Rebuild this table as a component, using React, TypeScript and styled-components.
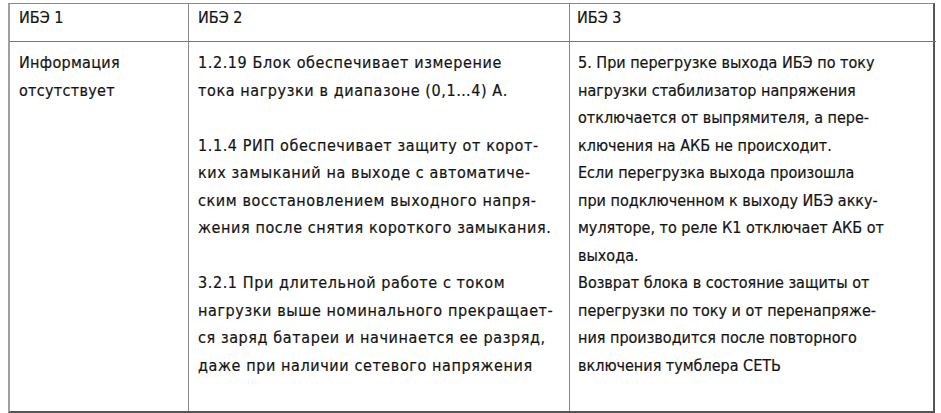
import React from "react";
import styled, { createGlobalStyle } from "styled-components";

const Global = createGlobalStyle`
  html, body { margin: 0; padding: 0; background: #ffffff; }
  body { font-family: "DejaVu Sans Condensed", "DejaVu Sans", "Liberation Sans", Arial, sans-serif; font-stretch: condensed; }
`;

const Page = styled.div`
  padding: 3px 0 0 8px;
  width: 941px;
  height: 413px;
  box-sizing: border-box;
`;

const Table = styled.div`
  display: grid;
  grid-template-columns: 179px 381px 366px;
  grid-template-rows: 38px 369px;
  width: 927px;
  border-top: 1px solid #8a8a8a;
  border-left: 2px solid #a0a0a0;
  border-right: 2px solid #555555;
  border-bottom: 2px solid #555555;
  box-sizing: border-box;
  color: #141414;
  font-size: 16px;
  -webkit-text-stroke: 0.2px #141414;
`;

const Cell = styled.div<{ $last?: boolean; $head?: boolean; $spacing?: number; $padLeft?: number }>`
  box-sizing: border-box;
  padding-top: ${(p) => (p.$head ? "1px" : "7px")};
  padding-right: 8px;
  padding-left: ${(p) => p.$padLeft ?? 9}px;
  border-right: ${(p) => (p.$last ? "none" : "1px solid #8a8a8a")};
  border-bottom: ${(p) => (p.$head ? "1px solid #777777" : "none")};
  line-height: ${(p) => (p.$head ? "26px" : "27.5px")};
  letter-spacing: ${(p) => p.$spacing ?? 0}px;
`;

const Para = styled.p`
  margin: 0 0 27.5px 0;
  &:last-child { margin-bottom: 0; }
`;

const Line = styled.span`
  display: block;
  white-space: nowrap;
`;

const col2: string[][] = [
  ["1.2.19 Блок обеспечивает измерение", "тока нагрузки в диапазоне (0,1…4) А."],
  [
    "1.1.4 РИП обеспечивает защиту от корот-",
    "ких замыканий на выходе с автоматиче-",
    "ским восстановлением выходного напря-",
    "жения после снятия короткого замыкания.",
  ],
  [
    "3.2.1 При длительной работе с током",
    "нагрузки выше номинального прекращает-",
    "ся заряд батареи и начинается ее разряд,",
    "даже при наличии сетевого напряжения",
  ],
];

const col3: string[] = [
  "5. При перегрузке выхода ИБЭ по току",
  "нагрузки стабилизатор напряжения",
  "отключается от выпрямителя, а пере-",
  "ключения на АКБ не происходит.",
  "Если перегрузка выхода произошла",
  "при подключенном к выходу ИБЭ акку-",
  "муляторе, то реле К1 отключает АКБ от",
  "выхода.",
  "Возврат блока в состояние защиты от",
  "перегрузки по току и от перенапряже-",
  "ния производится после повторного",
  "включения тумблера СЕТЬ",
];

export default function App() {
  return (
    <>
      <Global />
      <Page>
        <Table>
          <Cell $head $padLeft={9}>ИБЭ 1</Cell>
          <Cell $head $padLeft={9}>ИБЭ 2</Cell>
          <Cell $head $last $padLeft={7}>ИБЭ 3</Cell>
          <Cell $padLeft={9} $spacing={0.3}>
            <Line>Информация</Line>
            <Line>отсутствует</Line>
          </Cell>
          <Cell $padLeft={9} $spacing={0.6}>
            {col2.map((para, i) => (
              <Para key={i}>
                {para.map((l, j) => (
                  <Line key={j}>{l}</Line>
                ))}
              </Para>
            ))}
          </Cell>
          <Cell $last $padLeft={8}>
            {col3.map((l, j) => (
              <Line key={j}>{l}</Line>
            ))}
          </Cell>
        </Table>
      </Page>
    </>
  );
}
